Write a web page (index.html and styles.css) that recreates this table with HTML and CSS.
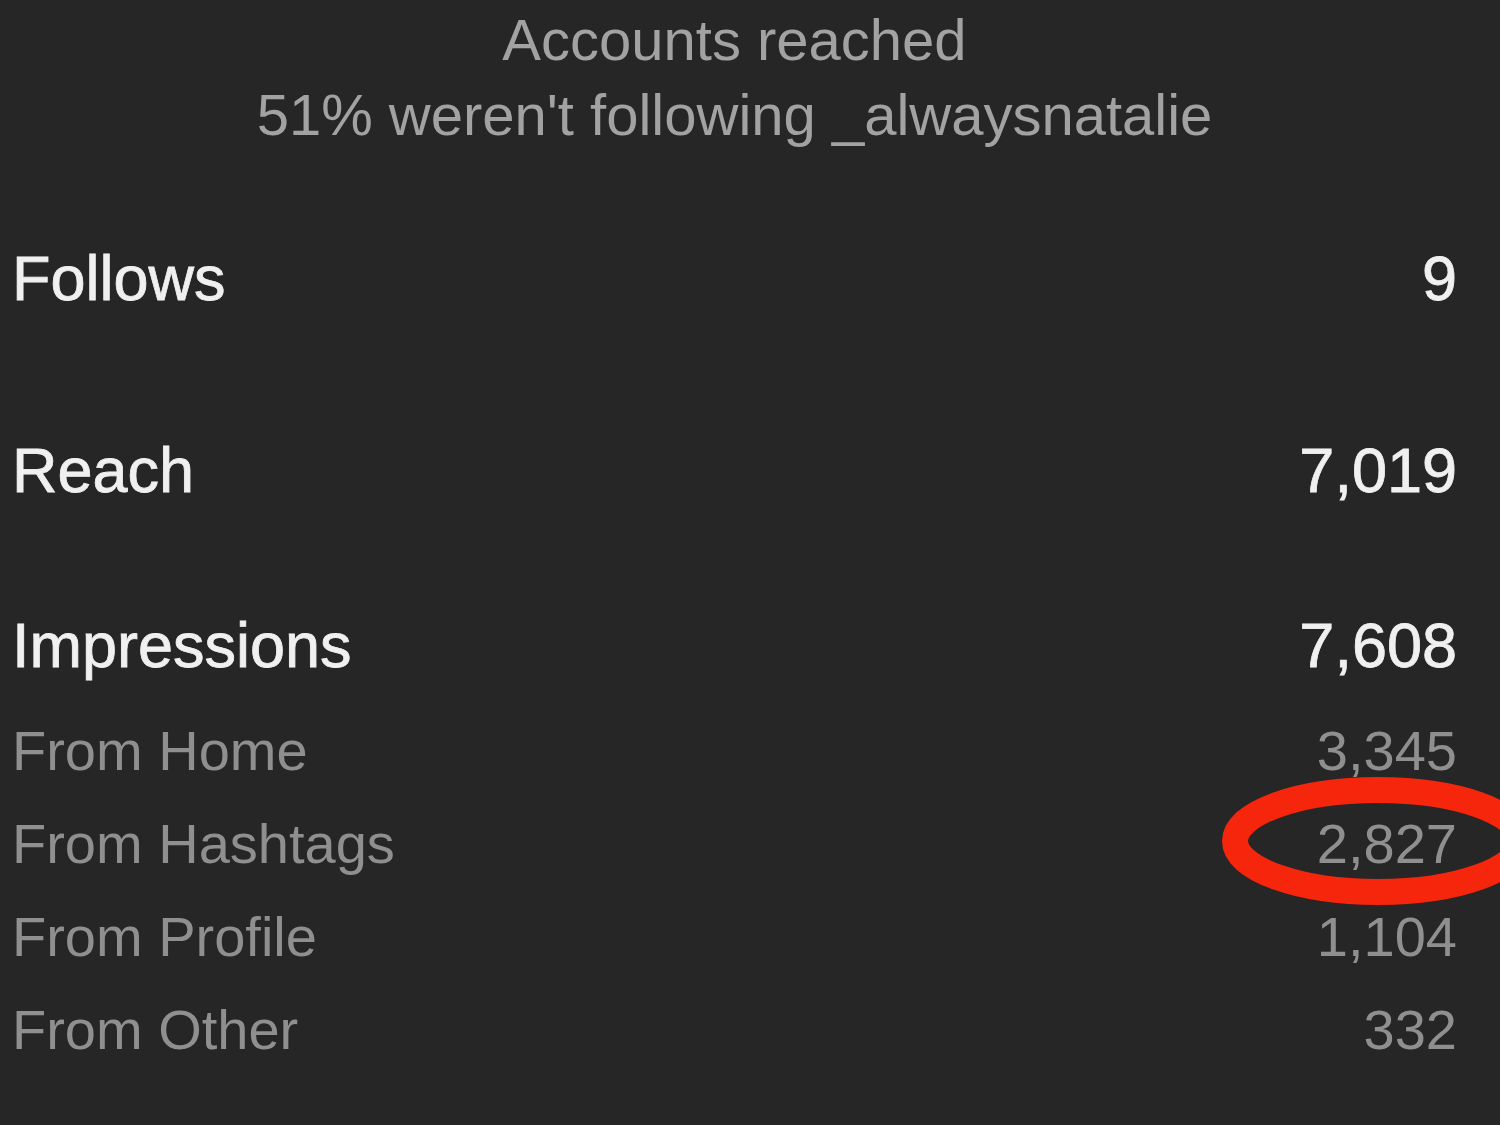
FILE: index.html
```html
<!DOCTYPE html>
<html lang="en">
<head>
<meta charset="utf-8">
<title>Insights</title>
<link rel="stylesheet" href="styles.css">
</head>
<body>
<main class="insights">
  <header class="reach-summary">
    <div class="summary-title">Accounts reached</div>
    <div class="summary-sub">51% weren't following _alwaysnatalie</div>
  </header>

  <section class="metric metric-follows">
    <span class="metric-label">Follows</span>
    <span class="metric-value">9</span>
  </section>

  <section class="metric metric-reach">
    <span class="metric-label">Reach</span>
    <span class="metric-value">7,019</span>
  </section>

  <section class="metric metric-impressions">
    <span class="metric-label">Impressions</span>
    <span class="metric-value">7,608</span>
  </section>

  <ul class="breakdown">
    <li class="breakdown-row"><span>From Home</span><span>3,345</span></li>
    <li class="breakdown-row highlighted"><span>From Hashtags</span><span>2,827</span>
      <svg class="circle-mark" width="330" height="134" viewBox="0 0 330 134" aria-hidden="true">
        <ellipse cx="160" cy="67" rx="143" ry="51" fill="none" stroke="#f5260c" stroke-width="26"/>
      </svg>
    </li>
    <li class="breakdown-row"><span>From Profile</span><span>1,104</span></li>
    <li class="breakdown-row"><span>From Other</span><span>332</span></li>
  </ul>
</main>
</body>
</html>
```

FILE: styles.css
```css
html, body {
  margin: 0;
  padding: 0;
  background: #262626;
  overflow: hidden;
}

body {
  width: 1500px;
  height: 1125px;
  font-family: "Liberation Sans", Arial, sans-serif;
}

.insights {
  display: flex;
  flex-direction: column;
  padding: 2px 43px 0 12px;
}

.reach-summary {
  text-align: center;
  font-size: 58px;
  line-height: 75px;
  color: #a2a2a2;
}

.metric {
  display: flex;
  justify-content: space-between;
  align-items: baseline;
  font-size: 63px;
  line-height: 80px;
  color: #f0f0f0;
  -webkit-text-stroke: 0.8px #f0f0f0;
}

.metric-follows {
  margin-top: 86px;
}

.metric-reach {
  margin-top: 112px;
}

.metric-impressions {
  margin-top: 95px;
}

.breakdown {
  list-style: none;
  margin: 19px 0 0;
  padding: 0;
  display: flex;
  flex-direction: column;
}

.breakdown-row {
  position: relative;
  display: flex;
  justify-content: space-between;
  font-size: 56px;
  line-height: 93px;
  color: #8f8f8f;
}

.circle-mark {
  position: absolute;
  left: 1206px;
  top: -23px;
  overflow: visible;
}
```
